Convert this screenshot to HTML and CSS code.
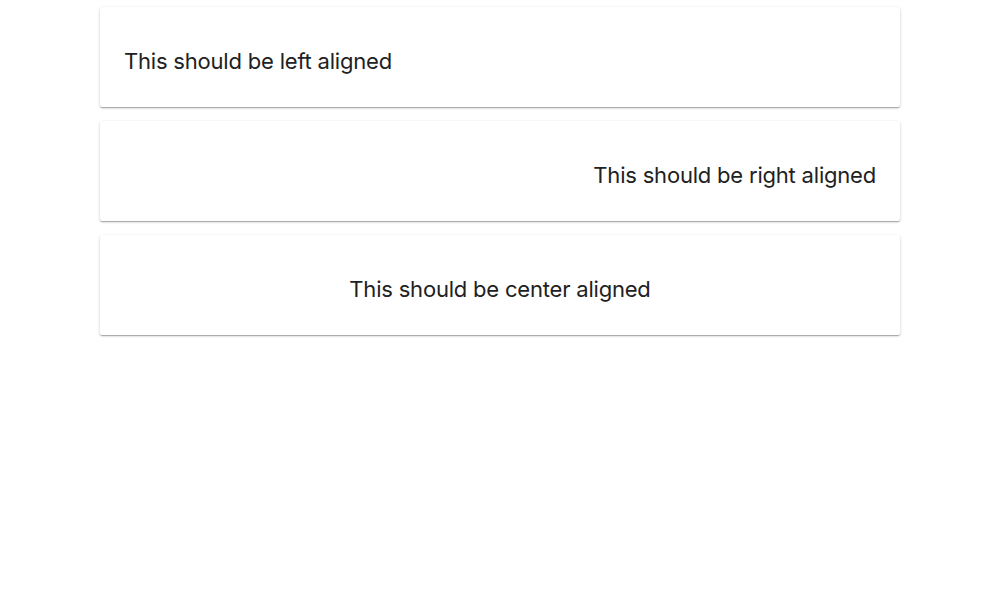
FILE: index.html
```html
<!DOCTYPE html>
<html>
<head>
<meta charset="utf-8">
<link rel="stylesheet" href="styles.css">
</head>
<body>
<main class="list">
  <div class="card left"><p class="text">This should be left aligned</p></div>
  <div class="card right"><p class="text">This should be right aligned</p></div>
  <div class="card center"><p class="text">This should be center aligned</p></div>
</main>
</body>
</html>
```
FILE: styles.css
```css
html, body { margin: 0; padding: 0; background: #fff; }
body { font-family: Inter, "Liberation Sans", sans-serif; color: #212121; min-height: 600px; }
.list {
  width: 800px;
  margin: 0 auto;
  padding: 7px 0 20px;
  display: flex;
  flex-direction: column;
  gap: 14px;
}
.card {
  background: #fff;
  border-radius: 2px;
  box-shadow: 0 1px 3px rgba(0,0,0,0.2), 0 1px 1px rgba(0,0,0,0.14), 0 2px 1px -1px rgba(0,0,0,0.12);
  height: 100px;
  box-sizing: border-box;
  padding: 0 24px;
  display: flex;
  flex-direction: column;
  justify-content: center;
}
.text { margin: 8px 0 0; font-size: 22px; line-height: 30px; letter-spacing: -0.2px; }
.left .text { text-align: left; }
.right .text { text-align: right; }
.center .text { text-align: center; }
```
